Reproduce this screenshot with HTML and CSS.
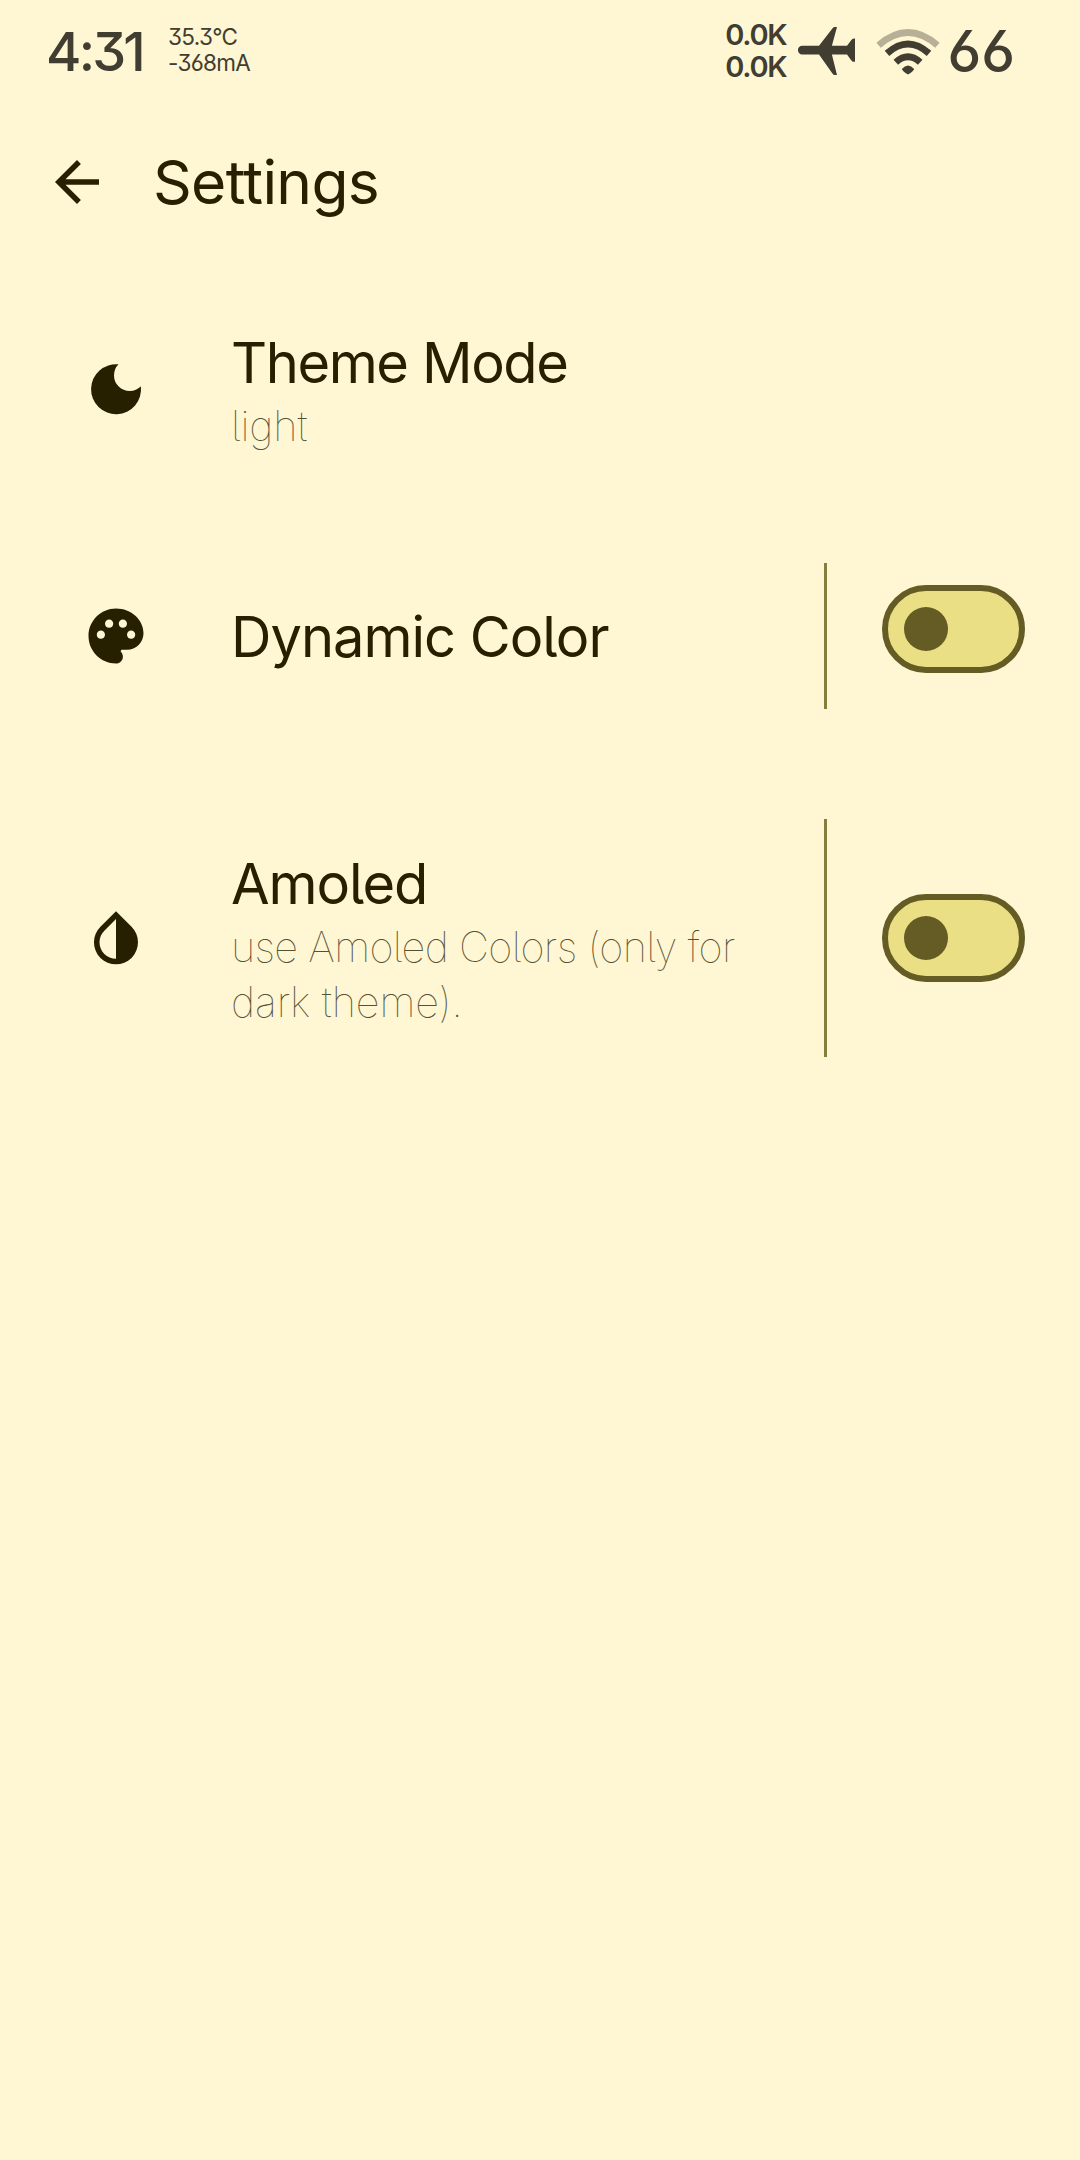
FILE: index.html
```html
<!DOCTYPE html>
<html lang="en">
<head>
<meta charset="utf-8">
<title>Settings</title>
<link rel="stylesheet" href="styles.css">
</head>
<body>
<div class="status-bar">
  <div class="clock">4:31</div>
  <div class="sensors">
    <div class="temp">35.3°C</div>
    <div class="current">-368mA</div>
  </div>
  <div class="network">
    <div>0.0K</div>
    <div>0.0K</div>
  </div>
  <svg class="plane" width="58" height="50" viewBox="0 0 58 50" fill="currentColor"><path d="M4.2 18.8H21L34.6 1.2Q35.4 0 36.8 0H39L33.9 18.8H49L53 13.4Q54.2 11.5 56 11.5H57V34.8H56Q54.2 34.8 53 32.9L49 27.4H33.9L39 48H36.8Q35.4 48 34.6 46.8L21 27.4H4.2A4.3 4.3 0 0 1 4.2 18.8Z"/></svg>
  <svg class="wifi" width="64" height="48" viewBox="0 0 64 48" fill="none" stroke="currentColor" stroke-width="6.8"><path opacity=".38" d="M2.6 17.2Q32 -8.2 61.4 17.2"/><path d="M11 25.4Q32 6.6 53 25.4"/><path d="M19.8 34.2Q32 23.3 44.2 34.2"/><path fill="currentColor" stroke="none" d="M25.8 41Q32 34 38.2 41Q37.6 43 32 46.6Q26.4 43 25.8 41Z"/></svg>
  <div class="battery">66</div>
</div>
<header class="app-bar">
  <svg class="back" width="66" height="66" viewBox="0 0 24 24" fill="currentColor"><path d="M20 11H7.83l5.59-5.59L12 4l-8 8 8 8 1.41-1.41L7.83 13H20v-2z"/></svg>
  <h1 class="page-title">Settings</h1>
</header>
<main class="settings">
  <section class="row row-theme">
    <svg class="row-icon" viewBox="0 0 66 66" fill="currentColor"><path d="M35.5 8.3A25 25 0 1 0 57.9 30.3A14.2 14.2 0 0 1 35.5 8.3Z"/></svg>
    <div class="row-text">
      <div class="row-title theme-title">Theme Mode</div>
      <div class="row-desc">light</div>
    </div>
  </section>
  <section class="row row-dynamic">
    <svg class="row-icon" viewBox="0 0 24 24" fill="currentColor"><path d="M12 2C6.49 2 2 6.49 2 12s4.49 10 10 10c1.38 0 2.5-1.12 2.5-2.5 0-.61-.23-1.2-.64-1.67-.08-.1-.13-.21-.13-.33 0-.28.22-.5.5-.5H16c3.31 0 6-2.69 6-6C22 6.04 17.51 2 12 2zm-5.500 11c-.83 0-1.500-.67-1.500-1.500S5.670 10 6.500 10 8 10.670 8 11.500 7.330 13 6.500 13zm3-4C8.670 9 8 8.330 8 7.500S8.670 6 9.500 6s1.500.67 1.500 1.500S10.330 9 9.500 9zm5 0c-.83 0-1.500-.67-1.500-1.500S13.670 6 14.500 6s1.500.67 1.500 1.500S15.330 9 14.500 9zm3 4c-.83 0-1.500-.67-1.500-1.500s.67-1.500 1.500-1.500 1.500.67 1.500 1.500-.67 1.500-1.500 1.500z"/></svg>
    <div class="row-text">
      <div class="row-title dynamic-title">Dynamic Color</div>
    </div>
    <div class="divider"></div>
    <div class="switch"><div class="thumb"></div></div>
  </section>
  <section class="row row-amoled">
    <svg class="row-icon" viewBox="0 0 24 24" fill="currentColor"><path d="M17.660 7.930L12 2.270 6.340 7.930c-3.120 3.120-3.120 8.190 0 11.310C7.900 20.800 9.950 21.580 12 21.580s4.100-.78 5.660-2.340c3.120-3.120 3.120-8.190 0-11.310zM12 19.590c-1.600 0-3.110-.62-4.240-1.760C6.620 16.690 6 15.190 6 13.590s.62-3.110 1.760-4.240L12 5.100v14.490z"/></svg>
    <div class="row-text">
      <div class="row-title amoled-title">Amoled</div>
      <div class="row-desc"><span class="tight">use Amoled Colors (only for</span><br>dark theme).</div>
    </div>
    <div class="divider"></div>
    <div class="switch"><div class="thumb"></div></div>
  </section>
</main>
</body>
</html>
```
FILE: styles.css
```css
* { box-sizing: border-box; }
body {
  margin: 0;
  height: 2160px;
  background: #fff6d3;
  color: #262000;
  font-family: Inter, "Noto Sans", sans-serif;
  font-feature-settings: "cv03", "cv05", "cv09", "calt" 0;
  white-space: nowrap;
}
svg { display: block; flex: none; }

.status-bar {
  display: flex;
  align-items: center;
  height: 97px;
  padding: 5px 65px 0 46px;
  color: #413d31;
}
.clock { width: 122px; padding-top: 2px; font-size: 54px; font-weight: 500; line-height: 60px; letter-spacing: -2.8px; }
.sensors { font-size: 22.5px; line-height: 26px; padding-bottom: 2px; }
.temp { letter-spacing: -0.6px; }
.current { letter-spacing: -0.7px; }
.network { margin-left: auto; font-size: 29px; font-weight: 600; line-height: 32px; letter-spacing: -1.3px; }
.plane { margin: 2px 0 0 12px; }
.wifi { margin: 2px 0 0 20px; }
.battery { margin-left: 7px; padding-top: 2px; font-size: 57px; font-weight: 500; line-height: 60px; letter-spacing: 0; }

.app-bar { display: flex; align-items: center; height: 170px; padding-left: 44px; }
.page-title { margin: 0 0 0 43px; font-size: 60.500px; font-weight: 400; line-height: 72px; letter-spacing: -0.7px; }

.settings { padding-top: 2px; }
.row { display: flex; align-items: center; padding: 0 55px 0 83px; }
.row-theme { height: 240px; }
.row-dynamic { height: 254px; }
.row-amoled { height: 349px; }
.row-icon { width: 66px; height: 66px; }
.row-text { flex: 1; padding: 2px 0 0 82px; }
.row-title { font-size: 56px; font-weight: 400; line-height: 72px; }
.theme-title { letter-spacing: -1.4px; }
.dynamic-title { letter-spacing: -1px; }
.amoled-title { letter-spacing: -1.1px; }
.row-desc { font-size: 41.500px; font-weight: 100; line-height: 55px; letter-spacing: -0.1px; color: #575134; }
.row-desc .tight { letter-spacing: -0.7px; }

.divider { width: 3px; background: #857d3a; margin-right: 55px; }
.row-dynamic .divider { height: 146px; }
.row-amoled .divider { height: 238px; }
.switch {
  display: flex;
  align-items: center;
  width: 143px;
  height: 88px;
  padding-left: 16px;
  border: 6px solid #645c24;
  border-radius: 44px;
  background: #ebdf85;
}
.row-dynamic .switch { margin-bottom: 14px; }
.thumb { width: 44px; height: 44px; border-radius: 50%; background: #645c24; }
```
